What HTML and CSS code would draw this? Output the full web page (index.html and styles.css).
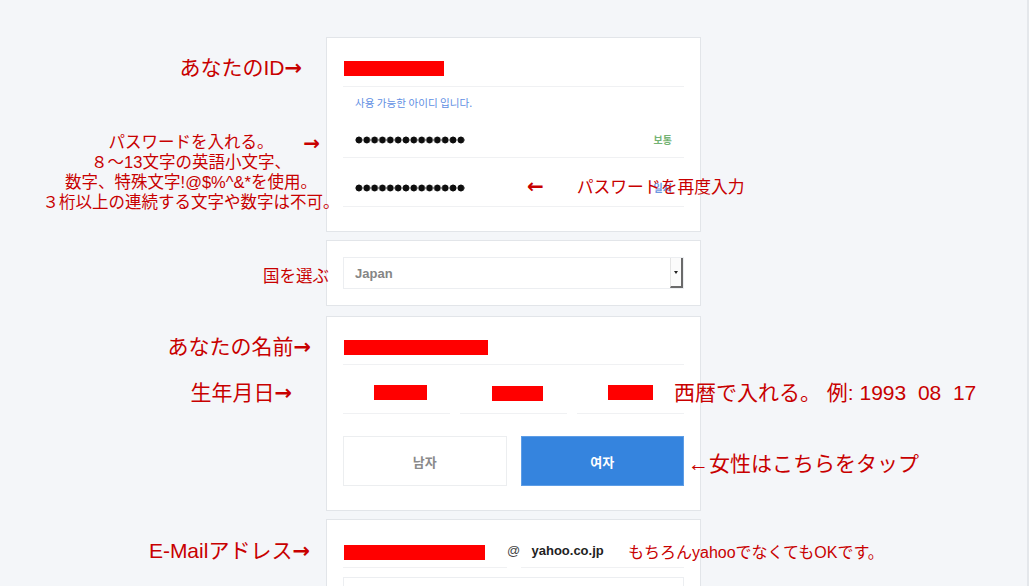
FILE: index.html
```html
<!DOCTYPE html>
<html lang="ja">
<head>
  <meta charset="UTF-8" />
  <meta name="viewport" content="width=device-width, initial-scale=1.0" />
  <title>会員登録の入力ガイド</title>
  <link rel="stylesheet" href="styles.css">
</head>
<body>
<div class="page">
  <div class="join">

    <!-- ID / パスワード -->
    <div class="card card-account">
      <div class="row row-id">
        <span class="note note-left note-id">あなたのID<span class="arr">→</span></span>
        <div class="redact redact-id"></div>
      </div>
      <p class="check-msg">사용 가능한 아이디 입니다.</p>
      <div class="row row-pw">
        <p class="note note-left note-pw">パスワードを入れる。<br>８〜13文字の英語小文字、<br>数字、特殊文字!@$%^&amp;*を使用。<br>３桁以上の連続する文字や数字は不可。</p>
        <span class="note note-left note-pw-arrow arr">→</span>
        <div class="dots"></div>
        <span class="pw-state pw-ok">보통</span>
      </div>
      <div class="row row-pw">
        <div class="dots"></div>
        <span class="pw-state pw-match">일치</span>
        <span class="note note-repw"><span class="arr">←</span>パスワードを再度入力</span>
      </div>
    </div>

    <!-- 国 -->
    <div class="card card-country">
      <div class="select">
        <span class="note note-left note-country">国を選ぶ</span>
        <span class="select-value">Japan</span>
        <span class="select-btn"></span>
      </div>
    </div>

    <!-- 名前 / 生年月日 / 性別 -->
    <div class="card card-profile">
      <div class="row row-name">
        <span class="note note-left note-name">あなたの名前<span class="arr">→</span></span>
        <div class="redact redact-name"></div>
      </div>
      <div class="row birth">
        <span class="note note-left note-birth">生年月日<span class="arr">→</span></span>
        <div class="birth-field"><div class="redact redact-year"></div></div>
        <div class="birth-field"><div class="redact redact-month"></div></div>
        <div class="birth-field"><div class="redact redact-day"></div></div>
        <span class="note note-right note-date">西暦で入れる。 例: 1993&nbsp;&nbsp;08&nbsp;&nbsp;17</span>
      </div>
      <div class="row gender">
        <button class="gender-btn">남자</button>
        <button class="gender-btn selected">여자</button>
        <span class="note note-right note-gender">←女性はこちらをタップ</span>
      </div>
    </div>

    <!-- メール -->
    <div class="card card-mail">
      <div class="row row-mail">
        <span class="note note-left note-mail">E-Mailアドレス<span class="arr">→</span></span>
        <div class="mail-field"><div class="redact redact-mail"></div></div>
        <span class="mail-at">@</span>
        <div class="mail-field mail-domain">yahoo.co.jp</div>
        <span class="note note-yahoo">もちろんyahooでなくてもOKです。</span>
      </div>
      <div class="mail-next"></div>
    </div>

  </div>
</div>
</body>
</html>
```

FILE: styles.css
```css
body {
  margin: 0;
  background: #f4f6f9;
  font-family: 'Liberation Sans', 'Noto Sans CJK JP', sans-serif;
}

.page {
  height: 100vh;
  overflow: hidden;
  border-right: 2px solid #e4e7eb;
  box-sizing: border-box;
}

.join {
  width: 375px;
  margin: 0 auto;
  padding-top: 37px;
}

.card {
  background: #ffffff;
  border: 1px solid #e2e5e9;
  padding: 0 16px;
}

.row {
  position: relative;
}

.redact {
  background: #ff0000;
  height: 15px;
}

/* 注釈（赤い文字） */
.note {
  position: absolute;
  z-index: 1;
  margin: 0;
  color: #c80000;
  white-space: nowrap;
  font-size: 21px;
  line-height: 24px;
}

.arr {
  font-family: 'DejaVu Sans', sans-serif;
  font-weight: bold;
}

.note-id { right: calc(100% + 41px); top: 18px; }
.note-name { right: calc(100% + 32px); top: 18px; }
.note-birth { right: calc(100% + 51px); top: 16px; }
.note-mail { right: calc(100% + 33px); top: 19px; }

.note-pw {
  right: calc(100% + 1px);
  top: 21px;
  width: 302px;
  text-align: center;
  font-size: 16.5px;
  line-height: 20px;
}

.note-pw-arrow {
  right: calc(100% + 23px);
  top: 21px;
  font-size: 20px;
  line-height: 22px;
}

.note-country {
  right: calc(100% + 15px);
  top: 8px;
  font-size: 16.5px;
  line-height: 20px;
}

.note-repw {
  left: 184px;
  top: 17px;
  font-size: 16.8px;
  line-height: 22px;
}

.note-repw .arr {
  font-size: 20px;
  margin-right: 33px;
}

.note-date { left: calc(100% - 10px); top: 16px; }
.note-gender { left: calc(100% + 4px); top: 16px; }

.note-yahoo {
  left: 285px;
  top: 23px;
  font-size: 16px;
  line-height: 20px;
}

/* ID / パスワード */
.card-account {
  padding-bottom: 24px;
}

.row-id {
  height: 49px;
  box-sizing: border-box;
  padding-top: 23px;
  border-bottom: 1px solid #f0f1f3;
}

.redact-id {
  width: 100px;
  margin-left: 1px;
}

.check-msg {
  margin: 0;
  height: 24px;
  box-sizing: border-box;
  padding: 9px 0 0 12px;
  font-family: 'Noto Sans CJK KR', sans-serif;
  font-size: 10.6px;
  line-height: 14px;
  color: #5f8fe3;
}

.row-pw {
  height: 47px;
  box-sizing: border-box;
  display: flex;
  align-items: center;
  padding: 11px 12px 0;
  border-bottom: 1px solid #f0f1f3;
}

.row-pw + .row-pw {
  height: 49px;
}

.dots {
  width: 110px;
  height: 8px;
  background: radial-gradient(circle at center, #0e0e0e 0, #0e0e0e 3.1px, transparent 3.8px) 0 0 / 7.857px 8px repeat-x;
}

.pw-state {
  margin-left: auto;
  font-family: 'Noto Sans CJK KR', sans-serif;
  font-size: 10px;
  font-weight: bold;
}

.pw-ok { color: #74b374; }
.pw-match { color: #6b97e2; }

/* 国 */
.card-country {
  padding: 16px;
  margin-top: 8px;
}

.select {
  position: relative;
  height: 32px;
  box-sizing: border-box;
  border: 1px solid #eceef1;
  display: flex;
  align-items: center;
}

.select-value {
  padding-left: 11px;
  font-size: 13px;
  font-weight: bold;
  color: #858585;
}

.select-btn {
  margin-left: auto;
  width: 13px;
  height: 100%;
  box-sizing: border-box;
  border-left: 1px solid #e4e4e4;
  border-right: 2px solid #6a6a6a;
  border-bottom: 2px solid #6a6a6a;
  background: #fbfbfb;
  display: flex;
  align-items: center;
  justify-content: center;
}

.select-btn::after {
  content: '';
  border-top: 3px solid #222;
  border-left: 2.5px solid transparent;
  border-right: 2.5px solid transparent;
}

/* 名前 / 生年月日 / 性別 */
.card-profile {
  margin-top: 10px;
  padding-bottom: 24px;
}

.row-name {
  height: 48px;
  box-sizing: border-box;
  padding-top: 23px;
  border-bottom: 1px solid #f0f1f3;
}

.redact-name {
  width: 144px;
  margin-left: 1px;
}

.birth {
  display: grid;
  grid-template-columns: repeat(3, 1fr);
  gap: 10px;
}

.birth-field {
  height: 49px;
  box-sizing: border-box;
  padding: 20px 0 0 31px;
  border-bottom: 1px solid #f0f1f3;
}

.redact-year { width: 53px; }
.redact-month { width: 51px; margin-left: 1px; margin-top: 1px; }
.redact-day { width: 45px; }

.gender {
  display: grid;
  grid-template-columns: 1fr 1fr;
  gap: 14px;
  margin-top: 22px;
}

.gender-btn {
  height: 50px;
  border: 1px solid #eceef0;
  background: #ffffff;
  color: #8a8a8a;
  font-family: 'Noto Sans CJK KR', sans-serif;
  font-size: 13px;
  font-weight: bold;
  padding: 0;
}

.gender-btn.selected {
  background: #3584de;
  border-color: #5d9de6;
  color: #ffffff;
}

/* メール */
.card-mail {
  margin-top: 8px;
  padding-bottom: 24px;
}

.row-mail {
  display: grid;
  grid-template-columns: 1fr 14px 1fr;
  align-items: start;
}

.mail-field {
  height: 48px;
  box-sizing: border-box;
  padding-top: 25px;
  border-bottom: 1px solid #f0f1f3;
}

.redact-mail {
  width: 141px;
  margin-left: 1px;
}

.mail-at {
  padding-top: 23px;
  text-align: center;
  font-size: 13px;
  color: #444;
}

.mail-domain {
  padding: 23px 0 0 11px;
  font-size: 13px;
  font-weight: bold;
  color: #222;
}

.mail-next {
  margin-top: 9px;
  height: 48px;
  border: 1px solid #eceef1;
}
```
